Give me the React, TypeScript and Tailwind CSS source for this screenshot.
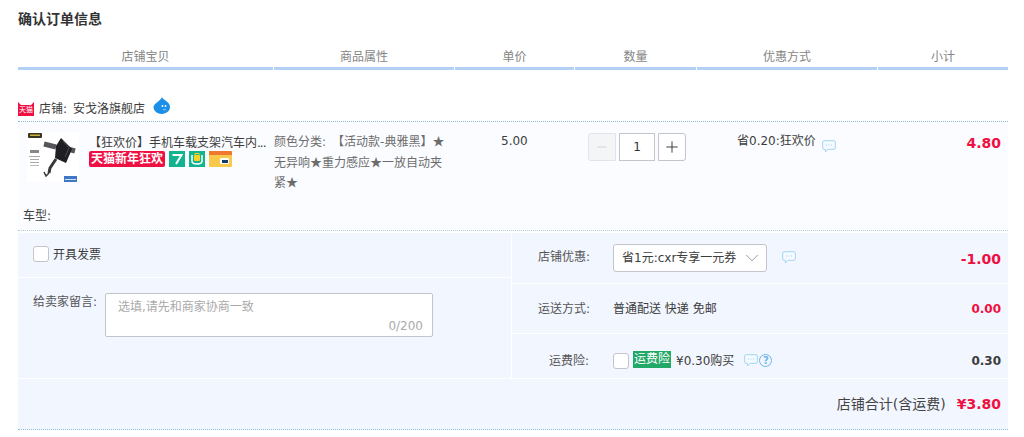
import { ChevronDown, Minus, Plus } from "lucide-react";

const font = { fontFamily: '"DejaVu Sans", "Noto Sans CJK SC", sans-serif' };

const columns = [
    { title: "店铺宝贝", width: "w-[255px]" },
    { title: "商品属性", width: "w-[180px]" },
    { title: "单价", width: "w-[119px]" },
    { title: "数量", width: "w-[121px]" },
    { title: "优惠方式", width: "w-[180px]" },
    { title: "小计", width: "w-[130px]" },
];

function Bubble() {
    return (
        <svg width="14" height="13" viewBox="0 0 14 13" fill="none" className="shrink-0">
            <path d="M2 .7h10c.7 0 1.300.6 1.300 1.300v6c0 .7-.6 1.300-1.300 1.300H6L3.400 12V9.300H2C1.300 9.300.7 8.700.7 8V2C.7 1.300 1.300.7 2 .7z" fill="#f4faff" stroke="#a5d4f2" />
            <path d="M4 5h1M6.500 5h1M9 5h1" stroke="#a5d4f2" />
        </svg>
    );
}

function TmallIcon() {
    return (
        <div className="relative h-[14px] w-4 shrink-0">
            <svg width="16" height="14" viewBox="0 0 16 14">
                <path d="M0 0l3 3h10l3-3v14H0z" fill="#ef1042" />
            </svg>
            <span className="absolute left-0 top-[3px] w-4 text-center text-[7px] leading-[10px] text-white">天猫</span>
        </div>
    );
}

function WangWang() {
    return (
        <svg width="17" height="17" viewBox="0 0 17 17">
            <path d="M9 0c.5 3 8 4.500 8 10a8 6.500 0 0 1-16.500.5C.5 6 7 5 9 0z" fill="#1c8fe8" />
            <circle cx="9.500" cy="9" r=".9" fill="#fff" />
            <circle cx="12.500" cy="9" r=".9" fill="#fff" />
            <path d="M10 12.500c1 .5 2 .5 3-.5" stroke="#fff" strokeWidth=".6" fill="none" />
        </svg>
    );
}

function Thumb() {
    return (
        <svg width="52" height="50" viewBox="0 0 52 50" fill="none" className="shrink-0 bg-white">
            <rect x="1" y="1" width="14" height="5" rx="1" fill="#3a3520" />
            <rect x="3" y="2.500" width="10" height="1.500" fill="#c8b040" />
            <path d="M17 12l12 3" stroke="#55555a" strokeWidth="5" />
            <path d="M41 17l7 2" stroke="#55555a" strokeWidth="5" />
            <path d="M34 6l11 11-6 14-11-5 1-12z" fill="#1f1f23" />
            <path d="M36 9l6 7-4 9" stroke="#4a4a50" strokeWidth="1" />
            <path d="M29 27l-6 9-1 5" stroke="#38383c" strokeWidth="3" />
            <path d="M22 41l-3 3-2-4" stroke="#38383c" strokeWidth="1.500" />
            <rect x="3" y="18" width="9" height="3" fill="#888" />
            <rect x="2" y="24" width="11" height="1" fill="#aaa" />
            <rect x="3" y="27" width="9" height="1" fill="#aaa" />
            <rect x="3" y="30" width="9" height="1" fill="#aaa" />
            <rect x="3" y="33" width="9" height="1" fill="#bbb" />
            <rect x="37" y="44" width="13" height="6" fill="#3f78c4" />
            <rect x="38" y="47" width="11" height="1" fill="#cfe0f5" />
        </svg>
    );
}

function Badges() {
    return (
        <div className="flex items-center gap-1">
            <span className="flex h-4 w-[76px] items-center justify-center rounded-[2px] bg-[#ef1042] text-[12px] font-bold leading-none text-white">天猫新年狂欢</span>
            <span className="flex h-4 w-4 items-center justify-center bg-[#12b48f]">
                <svg width="12" height="12" viewBox="0 0 12 12" fill="none">
                    <path d="M1.500 2h9L5 11" stroke="#fff" strokeWidth="2" />
                </svg>
            </span>
            <span className="flex h-4 w-4 items-center justify-center bg-[#12b48f]">
                <svg width="14" height="14" viewBox="0 0 14 14" fill="none">
                    <path d="M2 3v6c0 2 2 3 5 3s5-1 5-3V3" stroke="#fff" strokeWidth="1.500" />
                    <rect x="4" y="3" width="6" height="6" rx="1" fill="#f5d327" />
                    <path d="M5 3V1.500h4V3" stroke="#f5d327" />
                </svg>
            </span>
            <span className="flex h-4 w-[23px] flex-col overflow-hidden rounded-[1px] bg-[#f9c94d]">
                <span className="h-1 w-full bg-[#f0782e]" />
                <span className="ml-[11px] mt-[3px] flex h-[6px] w-[9px] items-center justify-center rounded-[1px] bg-white">
                    <span className="h-[3px] w-[6px] bg-[#183a6a]" />
                </span>
            </span>
        </div>
    );
}

function Checkbox() {
    return <span className="block h-4 w-4 shrink-0 rounded-[3px] border border-[#c3c4cc] bg-white" />;
}

function Star() {
    return <span className="font-['Noto_Sans_CJK_SC'] leading-none">★</span>;
}

function Stepper() {
    return (
        <div className="flex gap-[3px] text-[#333]">
            <span className="flex h-7 w-7 items-center justify-center rounded-l-[3px] border border-[#e3e4e8] bg-[#f4f5f7] text-[#c0c0c0]">
                <Minus size={14} strokeWidth={1} />
            </span>
            <span className="flex h-7 w-9 items-center justify-center border border-[#c3c4cc] bg-white text-[12px]">1</span>
            <span className="flex h-7 w-[28px] items-center justify-center rounded-r-[3px] border border-[#c3c4cc] bg-white">
                <Plus size={18} strokeWidth={1.250} />
            </span>
        </div>
    );
}

export default function App() {
    return (
        <div style={font} className="h-[437px] w-[1024px] overflow-hidden bg-white pl-[18px] text-[12px] text-[#3c3c3c]">
            <h1 className="pt-[11px] text-[14px] font-bold leading-4 text-[#333]">确认订单信息</h1>

            <div className="mt-[22px] flex w-[990px] gap-px">
                {columns.map((col) => (
                    <div key={col.title} className={`${col.width} border-b-[3px] border-[#b2d1f5] pb-[2px] text-center leading-4 text-[#858585]`}>
                        {col.title}
                    </div>
                ))}
            </div>

            <div className="mt-[29px] flex h-[23px] w-[990px] items-start gap-[8px] border-b border-dotted border-[#8fbdd4]">
                <div className="flex items-center gap-[5px] pt-[2px]">
                    <TmallIcon />
                    <span className="leading-4">
                        店铺:<span className="ml-[6px]">安戈洛旗舰店</span>
                    </span>
                </div>
                <div className="-mt-[2px]">
                    <WangWang />
                </div>
            </div>

            <div className="h-[109px] w-[990px] border-b border-dotted border-[#b9cdd8] bg-[#fbfcff]">
                <div className="flex h-[86px]">
                    <div className="flex w-[256px] pl-[9px] pt-[10px]">
                        <Thumb />
                        <div className="ml-[10px] w-[180px] min-w-0">
                            <p className="whitespace-nowrap pt-[3px] leading-4">
                                【狂欢价】手机车载支架汽车内<span className="tracking-[-1px]">...</span>
                            </p>
                            <Badges />
                        </div>
                    </div>
                    <div className="w-[181px] whitespace-nowrap pt-[10px] text-[12px] leading-5 text-[#6c6c6c]">
                        <div className="h-5">
                            颜色分类:<span className="ml-[6px]">【活动款-典雅黑】</span>
                            <Star />
                        </div>
                        <div className="h-5 pt-px">
                            无异响
                            <Star />
                            重力感应
                            <Star />
                            一放自动夹
                        </div>
                        <div className="h-5 pt-px">
                            紧<Star />
                        </div>
                    </div>
                    <div className="w-[119px] pl-[46px] pt-[11px] leading-4">5.00</div>
                    <div className="w-[122px] pl-[14px] pt-[11px]">
                        <Stepper />
                    </div>
                    <div className="flex w-[180px] gap-[6px] pl-[41px] pt-[11px] leading-4">
                        <span className="whitespace-nowrap">省0.20:狂欢价</span>
                        <span className="mt-[7px]">
                            <Bubble />
                        </span>
                    </div>
                    <div className="flex-1 pr-[7px] pt-[11px] text-right text-[14px] font-bold leading-5 text-[#ef1042]">4.80</div>
                </div>
                <p className="pl-[5px] leading-4">车型:</p>
            </div>

            <div className="mt-[2px] flex h-[197px] w-[990px] flex-col bg-[#f2f6ff]">
                <div className="flex">
                    <div className="flex w-[494px] flex-col border-r border-white">
                        <div className="flex h-[45px] items-start gap-1 border-b border-white pl-[15px] pt-[13px]">
                            <Checkbox />
                            <span className="mt-px leading-4">开具发票</span>
                        </div>
                        <div className="flex h-[101px] items-start border-b border-white pl-[15px] pt-[15px]">
                            <span className="mt-px w-[72px] leading-4 text-[#555]">给卖家留言:</span>
                            <div className="flex h-[44px] w-[328px] flex-col rounded-[2px] border border-[#c3c4cc] bg-white pl-3 pr-[9px]">
                                <span className="pt-[5px] leading-4 text-[#aaa]">选填,请先和商家协商一致</span>
                                <span className="pt-[3px] text-right leading-4 text-[#aaa]">0/200</span>
                            </div>
                        </div>
                    </div>
                    <div className="flex flex-1 flex-col">
                        <div className="flex h-[51px] items-start border-b border-white pr-[7px] pt-[11px]">
                            <span className="w-[78px] pt-[5px] text-right leading-4 text-[#555]">店铺优惠:</span>
                            <div className="ml-[23px] flex h-[28px] w-[154px] items-center justify-between rounded-[3px] border border-[#c3c4cc] bg-white pl-2 pr-[3px]">
                                <span className="whitespace-nowrap leading-4">省1元:cxr专享一元券</span>
                                <ChevronDown size={22} strokeWidth={0.8} className="text-[#777]" />
                            </div>
                            <span className="ml-[15px] mt-[7px]">
                                <Bubble />
                            </span>
                            <span className="ml-auto pt-[5px] text-[14px] font-bold leading-5 text-[#ef1042]">-1.00</span>
                        </div>
                        <div className="flex h-[50px] items-center border-b border-white pr-[7px]">
                            <span className="w-[78px] text-right leading-4 text-[#555]">运送方式:</span>
                            <span className="ml-[23px] leading-4">普通配送 快递 免邮</span>
                            <span className="ml-auto text-[12px] font-bold leading-5 text-[#ef1042]">0.00</span>
                        </div>
                        <div className="flex h-[45px] items-center border-b border-white pr-[7px] pt-[9px]">
                            <span className="w-[77px] text-right leading-4 text-[#555]">运费险:</span>
                            <span className="ml-[24px]">
                                <Checkbox />
                            </span>
                            <span className="-mt-[3px] ml-1 bg-[#22a867] px-px leading-[17px] text-white">运费险</span>
                            <span className="ml-[5px] leading-4">¥0.30购买</span>
                            <span className="ml-[10px] flex items-center gap-px">
                                <Bubble />
                                <span className="flex h-[13px] w-[13px] items-center justify-center rounded-full border border-[#6cb5e8] text-[10px] font-bold leading-none text-[#6cb5e8]">?</span>
                            </span>
                            <span className="ml-auto text-[12px] font-bold leading-5 text-[#3c3c3c]">0.30</span>
                        </div>
                    </div>
                </div>
                <div className="flex flex-1 items-center justify-end border-b border-dotted border-[#8fbdd4] pr-[7px]">
                    <span className="text-[14px] leading-5 text-[#444]">店铺合计(含运费)</span>
                    <span className="ml-[11px] text-[14px] font-bold leading-5 text-[#ef1042]">¥3.80</span>
                </div>
            </div>
        </div>
    );
}
